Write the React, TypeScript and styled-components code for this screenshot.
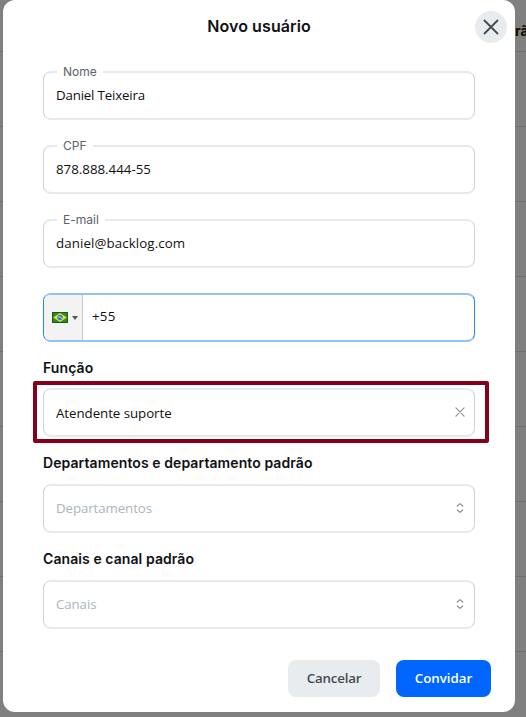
import React from "react";
import styled, { createGlobalStyle } from "styled-components";

const GlobalStyle = createGlobalStyle`
  * { box-sizing: border-box; }
  body { margin: 0; background: #808080; overflow: hidden; }
  button, input { font: inherit; }
`;

const Page = styled.main`
  position: relative;
  height: 717px;
  overflow: hidden;
  padding-left: 3px;
  background: repeating-linear-gradient(#808080 0 74px, #707070 74px 75px) 0 -23px / 100% 750px;
  font-family: "Open Sans", "Noto Sans", sans-serif;
`;

const BackdropHeading = styled.span`
  position: absolute;
  left: 515px;
  top: 22px;
  font: 700 14px/18px Inter, sans-serif;
  color: #080808;
`;

const Dialog = styled.section`
  position: relative;
  display: flex;
  flex-direction: column;
  width: 512px;
  height: 712.4px;
  padding: 0 40px;
  border-radius: 12px;
  background: #fff;
`;

const Header = styled.header`
  display: flex;
  justify-content: center;
  align-items: center;
  height: 53px;
  padding-bottom: 2px;
  flex: none;
`;

const Title = styled.h1`
  margin: 0;
  font: 600 16px/24px Inter, sans-serif;
  letter-spacing: 0.1px;
  color: #101113;
`;

const CloseButton = styled.button`
  position: absolute;
  top: 11px;
  right: 8px;
  display: grid;
  place-items: center;
  width: 32px;
  height: 32px;
  padding: 0;
  border: 0;
  border-radius: 50%;
  background: #e9ecef;
  color: #434a51;
`;

const Form = styled.form`
  display: flex;
  flex-direction: column;
  padding-top: 18px;
`;

const Stack = styled.div`
  display: flex;
  flex-direction: column;
  gap: 25px;
`;

const Box = styled.div<{ $active?: boolean }>`
  position: relative;
  display: flex;
  align-items: center;
  height: 49px;
  border-style: solid;
  border-width: 2px 1px;
  border-color: ${(p) => (p.$active ? "#91c3f2 #278be5" : "#e6e9ee #cfd4dc")};
  border-radius: 8px;
  background: #fff;
`;

const Legend = styled.label`
  position: absolute;
  top: -10px;
  left: 13px;
  padding: 0 6px;
  background: #fff;
  font: 400 12px/18px Inter, sans-serif;
  color: #5b636b;
`;

const Value = styled.input<{ $spacing?: number }>`
  flex: 1;
  min-width: 0;
  height: 24px;
  padding: 0 0 2px 12px;
  border: 0;
  outline: 0;
  background: transparent;
  font-size: 13.3px;
  letter-spacing: ${(p) => p.$spacing ?? 0}px;
  color: #111;
  &::placeholder { color: #adb5bd; opacity: 1; }
`;

const PhoneValue = styled(Value)`
  padding-left: 9px;
  margin-top: -2px;
`;

const SelectedValue = styled(Value)`
  padding-bottom: 0;
`;

const Country = styled.button`
  display: flex;
  align-items: center;
  gap: 4px;
  align-self: stretch;
  width: 39px;
  padding: 0 0 0 8px;
  border: 0;
  border-right: 1px solid #c8c8c8;
  border-radius: 6px 0 0 6px;
  background: #f3f3f3;
`;

const GroupLabel = styled.label`
  height: 46px;
  padding-top: 16px;
  font: 600 14px/20px Inter, sans-serif;
  letter-spacing: 0.08px;
  color: #101113;
`;

const SelectLabel = styled(GroupLabel)`
  height: 47px;
`;

const Highlighted = styled.div`
  position: relative;
  &::after {
    content: "";
    position: absolute;
    inset: -7px -14px -6px -10px;
    border: 4px solid #87001b;
    border-radius: 2px;
    pointer-events: none;
  }
`;

const Indicator = styled.span`
  display: grid;
  place-items: center;
  width: 28px;
  height: 24px;
  padding-bottom: 1px;
  color: #899099;
`;

const Footer = styled.footer`
  display: flex;
  justify-content: flex-end;
  gap: 16px;
  padding: 31px 0 0;
  margin-right: -16px;
`;

const Button = styled.button<{ $primary?: boolean }>`
  width: ${(p) => (p.$primary ? 95 : 92)}px;
  height: 37px;
  padding: 0 0 2px;
  border: 0;
  border-radius: 8px;
  background: ${(p) => (p.$primary ? "#0066ff" : "#e9ecef")};
  color: ${(p) => (p.$primary ? "#fff" : "#434a51")};
  font-size: 13.3px;
  font-weight: 600;
  letter-spacing: ${(p) => (p.$primary ? 0 : -0.2)}px;
`;

const Cross = ({ size, weight }: { size: number; weight: number }) => (
  <svg width={size} height={size} viewBox="0 0 16 16" fill="none" stroke="currentColor" strokeWidth={weight} strokeLinecap="round">
    <path d="M1.5 1.5 14.5 14.5M14.5 1.5 1.5 14.5" />
  </svg>
);

const Chevrons = () => (
  <svg width="8" height="12" viewBox="0 0 8 12" fill="none" stroke="currentColor" strokeWidth="1.2" strokeLinecap="round" strokeLinejoin="round">
    <path d="M1.3 4 4 1.6 6.7 4M1.3 8 4 10.4 6.7 8" />
  </svg>
);

const Flag = () => (
  <svg width="16" height="11" viewBox="0 0 16 11">
    <path fill="#2d8a20" d="M0 0h16v11H0z" />
    <path fill="none" stroke="#1c5a15" d="M.5.5h15v10H.5z" />
    <path fill="#e9e52e" d="M8 .9 14.8 5.5 8 10.1 1.2 5.5z" />
    <circle cx="8" cy="5.5" r="2.7" fill="#3979cf" />
    <path d="M5.8 4.8q2.5-.4 4.2 1.7" fill="none" stroke="#c7e4f4" strokeWidth=".8" />
  </svg>
);

const Caret = () => (
  <svg width="6" height="4" viewBox="0 0 6 4"><path d="M0 0h6L3 4z" fill="#555" /></svg>
);

const fields = [
  { label: "Nome", value: "Daniel Teixeira", spacing: -0.18 },
  { label: "CPF", value: "878.888.444-55", spacing: 0 },
  { label: "E-mail", value: "daniel@backlog.com", spacing: 0.1 },
];

const selects = [
  { label: "Departamentos e departamento padrão", placeholder: "Departamentos", spacing: -0.1 },
  { label: "Canais e canal padrão", placeholder: "Canais", spacing: -0.1 },
];

export default function App() {
  return (
    <Page>
      <GlobalStyle />
      <BackdropHeading>rã</BackdropHeading>
      <Dialog role="dialog">
        <Header>
          <Title>Novo usuário</Title>
          <CloseButton aria-label="Fechar"><Cross size={16} weight={1.8} /></CloseButton>
        </Header>
        <Form>
          <Stack>
            {fields.map((f) => (
              <Box key={f.label}>
                <Legend>{f.label}</Legend>
                <Value defaultValue={f.value} $spacing={f.spacing} />
              </Box>
            ))}
            <Box $active>
              <Country type="button"><Flag /><Caret /></Country>
              <PhoneValue defaultValue="+55" $spacing={0.25} />
            </Box>
          </Stack>
          <GroupLabel>Função</GroupLabel>
          <Highlighted>
            <Box>
              <SelectedValue defaultValue="Atendente suporte" $spacing={-0.05} />
              <Indicator><Cross size={10} weight={1.8} /></Indicator>
            </Box>
          </Highlighted>
          {selects.map((s) => (
            <React.Fragment key={s.label}>
              <SelectLabel>{s.label}</SelectLabel>
              <Box>
                <Value placeholder={s.placeholder} $spacing={s.spacing} />
                <Indicator><Chevrons /></Indicator>
              </Box>
            </React.Fragment>
          ))}
        </Form>
        <Footer>
          <Button>Cancelar</Button>
          <Button $primary>Convidar</Button>
        </Footer>
      </Dialog>
    </Page>
  );
}
